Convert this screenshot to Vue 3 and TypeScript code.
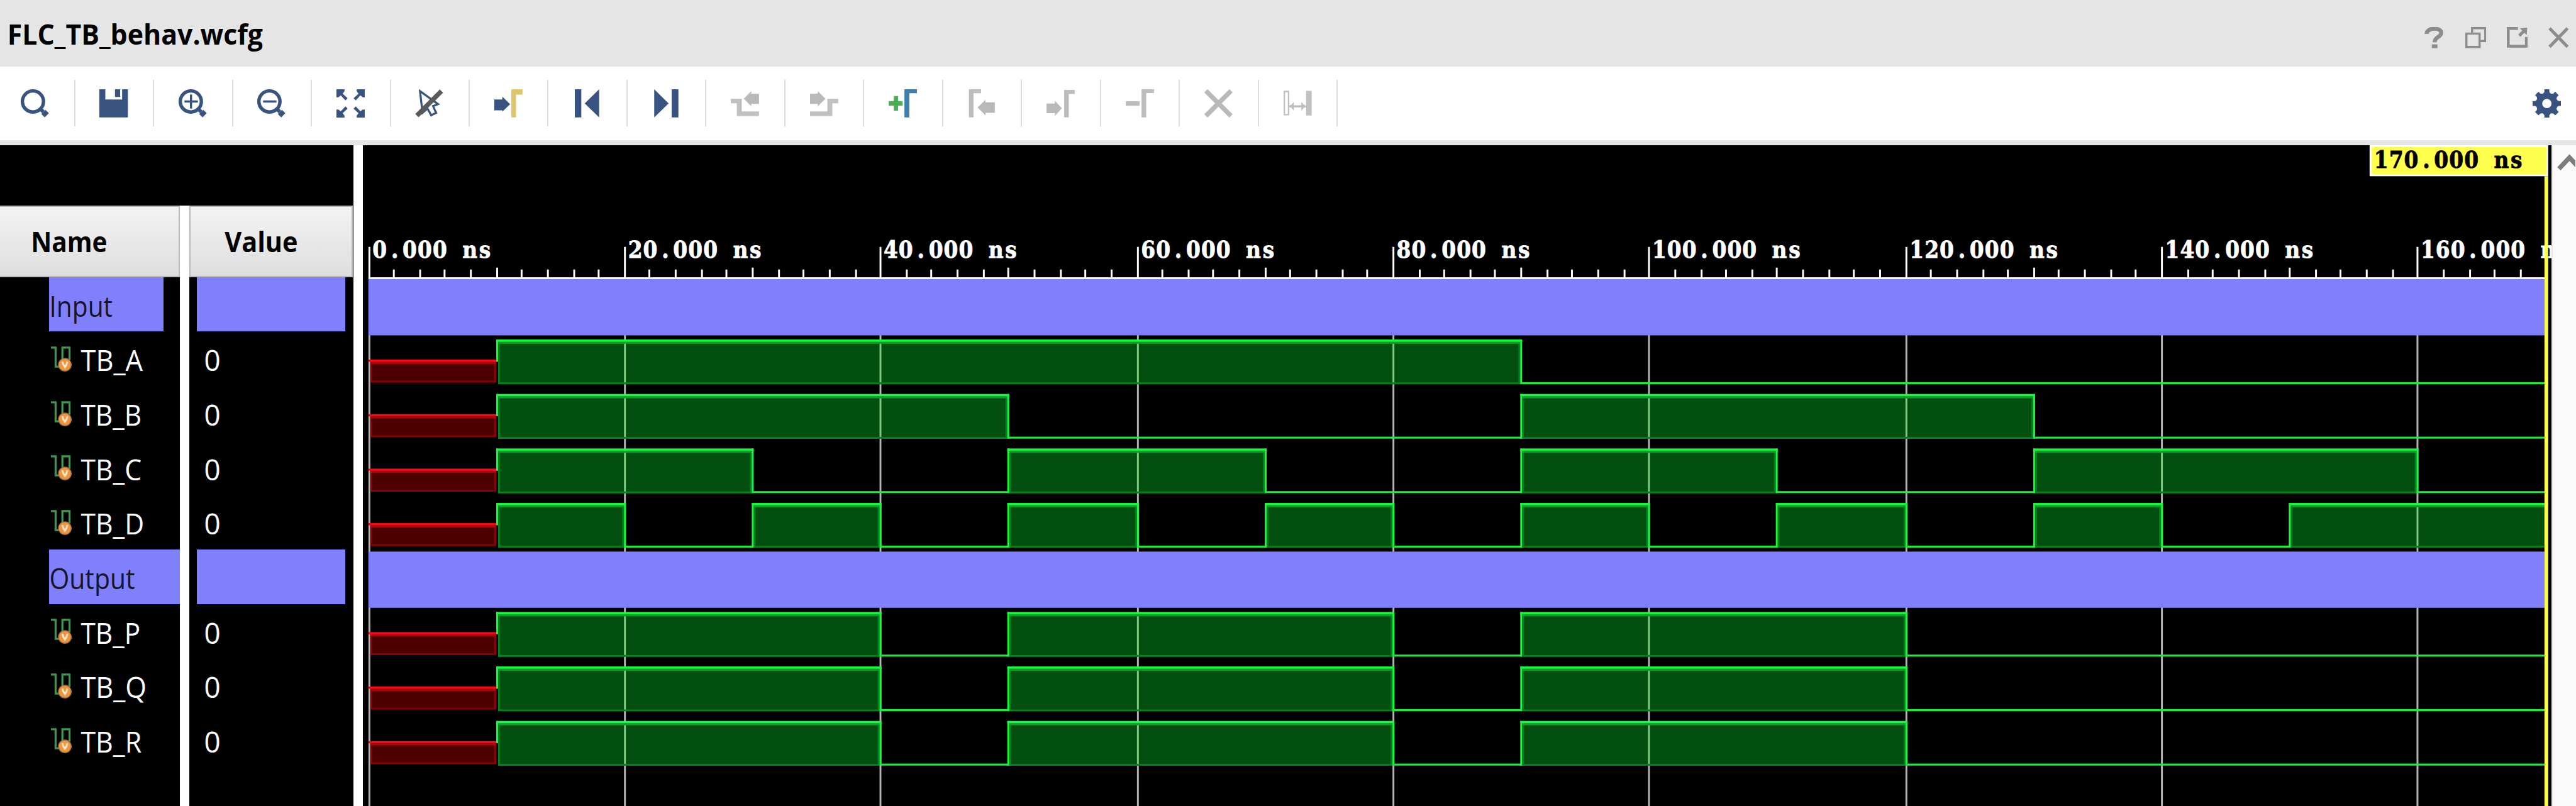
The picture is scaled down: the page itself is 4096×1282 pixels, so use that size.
<script setup lang="ts">
type Level = 'x' | '0' | '1'
interface Segment { from: number; to: number; level: Level }
interface Row { name: string; kind: 'group' | 'signal'; width: number; segments: Segment[] }

const END = 170
const UNIT = 3.03

// Builds the segments of a signal from the intervals in which it is high.
function wave(high: [number, number][]): Segment[] {
  const out: Segment[] = [{ from: 0, to: 10, level: 'x' }]
  let t = 10
  for (const [a, b] of high) {
    if (a > t) out.push({ from: t, to: a, level: '0' })
    out.push({ from: a, to: b, level: '1' })
    t = b
  }
  if (t < END) out.push({ from: t, to: END, level: '0' })
  return out
}

const outputs: [number, number][] = [[10, 40], [50, 80], [90, 120]]
const rows: Row[] = [
  { name: 'Input', kind: 'group', width: 102, segments: [] },
  { name: 'TB_A', kind: 'signal', width: 100, segments: wave([[10, 90]]) },
  { name: 'TB_B', kind: 'signal', width: 98, segments: wave([[10, 50], [90, 130]]) },
  { name: 'TB_C', kind: 'signal', width: 98, segments: wave([[10, 30], [50, 70], [90, 110], [130, 160]]) },
  { name: 'TB_D', kind: 'signal', width: 102, segments: wave([[10, 20], [30, 40], [50, 60], [70, 80], [90, 100], [110, 120], [130, 140], [150, 170]]) },
  { name: 'Output', kind: 'group', width: 138, segments: [] },
  { name: 'TB_P', kind: 'signal', width: 96, segments: wave(outputs) },
  { name: 'TB_Q', kind: 'signal', width: 106, segments: wave(outputs) },
  { name: 'TB_R', kind: 'signal', width: 98, segments: wave(outputs) },
]

// Horizontal position of a time in the wave pane, snapped to whole units.
const px = (ns: number): number => 10.5 + Math.floor(ns * 6.818) * UNIT
const rowTop = (i: number): number => 212.5 + i * 87.9

const minor = Array.from({ length: 85 }, (_, i) => i * 2).filter((t) => t % 20 !== 0)
const major = Array.from({ length: 9 }, (_, i) => i * 20)
const stamp = (ns: number): string => `${ns}.000 ns`
const glyphs = (s: string, x: number): { c: string; x: number }[] =>
  s.split('').map((c, i) => ({ c, x: x + (i + 0.5) * 24.24 })).filter((g) => g.c !== ' ')

const tools = ['find', 'save', 'in', 'out', 'fit', 'cursor', 'goto', 'first', 'last', 'prevT', 'nextT', 'add', 'prevM', 'nextM', 'remove', 'clear', 'swap']
</script>

<template>
  <div class="app">
    <header class="titlebar">
      <svg class="title" width="480" height="107"><text x="12" y="71.500" textLength="412" lengthAdjust="spacingAndGlyphs">FLC_TB_behav.wcfg</text></svg>
      <div class="winbtns">
        <svg width="34" height="34" viewBox="0 0 34 34"><path d="M4.500 11C5 0 29 0 28 10C27.500 17 17.500 15 17.500 24.500" fill="none" stroke="#8c8c8c" stroke-width="6.500" /><rect x="13" y="28" width="9" height="6" fill="#8c8c8c" /></svg>
        <svg width="34" height="34" viewBox="0 0 34 34" fill="none" stroke="#8c8c8c" stroke-width="3.500"><path d="M1.700 10.500H23V32.200H1.700ZM11 10V1.700H32.300V22.500H24" /></svg>
        <svg width="34" height="34" viewBox="0 0 34 34" fill="none" stroke="#8c8c8c" stroke-width="4.500"><path d="M18 2.200H2.300V31H31.500V16" /><path d="M20 14L28 6" stroke-width="5" /><path d="M21 2L33 1L32 13Z" fill="#8c8c8c" stroke="none" /></svg>
        <svg width="34" height="34" viewBox="0 0 34 34"><path d="M2 2L31 32M31 2L2 32" stroke="#8c8c8c" stroke-width="5" /></svg>
      </div>
    </header>

    <nav class="toolbar">
      <div class="tools">
        <div v-for="t in tools" :key="t" class="tool">
          <svg width="46" height="46" viewBox="0 0 46 46">
            <g v-if="t === 'find' || t === 'in' || t === 'out'" stroke="#385380" fill="none">
              <circle cx="19.700" cy="19.700" r="17" stroke-width="5.500" />
              <path d="M33 33L36.500 36.500" stroke-width="6" />
              <path d="M36.500 36.500L42 42" stroke-width="9.500" />
              <path v-if="t !== 'find'" d="M9.500 19.700H31" stroke-width="3.500" />
              <path v-if="t === 'in'" d="M20 8.500V31" stroke-width="3.500" />
            </g>
            <path v-else-if="t === 'save'" fill="#385380" d="M0 0H9.600V16.500H36.700V0H46V45.500H0ZM25.200 0H33.500V12.500H25.200Z" />
            <g v-else-if="t === 'fit'" fill="#385380">
              <path v-for="r in 4" :key="r" :transform="`rotate(${r * 90} 22.8 22.8)`" d="M0 0H13V3L10 7L18 14.500L14.500 18L7 10L3 13H0Z" />
            </g>
            <g v-else-if="t === 'cursor'" fill="none">
              <path d="M8 3L12 38L20 31L26 42L34 38L29 27L37 24Z" stroke="#385380" stroke-width="3.300" />
              <path d="M3 42.500L42.500 3" stroke="#595959" stroke-width="7.500" />
            </g>
            <g v-else-if="t === 'goto'">
              <path fill="#385380" d="M0 16.500H13V12L25.500 24L13 36V34H0Z" />
              <path fill="#dfc66d" d="M27.500 0H45.500V8.500H35V45.500H27.500Z" />
            </g>
            <path v-else-if="t === 'first'" fill="#385380" d="M3 0H13.500V45.500H3ZM42.300 0V45.500L19 22.700Z" />
            <path v-else-if="t === 'last'" fill="#385380" d="M31.500 0H42.300V45.500H31.500ZM3.300 0V45.500L26.500 22.700Z" />
            <g v-else-if="t === 'prevT'">
              <path fill="#b9b9b9" d="M45.500 7H33V3L21 15.300L33 27.500V23.500H45.500Z" />
              <path fill="#c0c0c0" d="M0 15.500H17.700V35.800H45.500V43H9.700V22.500H0Z" />
            </g>
            <g v-else-if="t === 'nextT'">
              <path fill="#b9b9b9" d="M0 7H12.500V3L25 15.300L12.500 27.500V23.500H0Z" />
              <path fill="#c0c0c0" d="M45.500 15.500H28V35.800H0V43H36V22.500H45.500Z" />
            </g>
            <g v-else-if="t === 'add'">
              <path fill="#48b055" d="M8.300 11H15.300V19H22.600V26.500H15.300V34.500H8.300V26.500H0V19H8.300Z" />
              <path fill="#3a7eb0" d="M25.500 0H45.600V6.400H33.300V45.500H25.500Z" />
            </g>
            <g v-else-if="t === 'prevM'" fill="#bdbdbd">
              <path d="M1.700 0H21.300V6.400H9V45.500H1.700Z" />
              <path fill="#b9b9b9" d="M43.500 21H28.500V17L15.500 29.500L28.500 42V38H43.500Z" />
            </g>
            <g v-else-if="t === 'nextM'" fill="#bdbdbd">
              <path d="M28.500 1H45.500V7.500H36V45.500H28.500Z" />
              <path fill="#b9b9b9" d="M0 23H13.500V18.500L24.800 30.700L13.500 43V38.500H0Z" />
            </g>
            <g v-else-if="t === 'remove'" fill="#bdbdbd">
              <path d="M25.500 0H45.700V6.200H33V45.500H25.500Z" />
              <path d="M0 19.200H22.300V26.500H0Z" />
            </g>
            <path v-else-if="t === 'clear'" d="M2.500 2.500L43 43M43 2.500L2.500 43" stroke="#b9b9b9" stroke-width="7.500" />
            <g v-else fill="none" stroke="#c0c0c0">
              <path d="M1.200 3.500H8V41H1.200Z" stroke-width="2.400" />
              <path d="M40.800 2.500V42.300" stroke-width="9" />
              <path d="M9 27.500H36" stroke-width="3.500" />
              <path d="M10 27.500L16.500 20.500V34.500ZM35.500 27.500L28.500 20.500V34.500Z" fill="#c0c0c0" stroke="none" />
            </g>
          </svg>
        </div>
      </div>
      <svg class="gear" width="46" height="46" viewBox="-23 -23 46 46">
        <g fill="#385380"><circle r="12.500" fill="none" stroke="#385380" stroke-width="10" />
          <path v-for="r in 8" :key="r" :transform="`rotate(${r * 45})`" d="M-6.500 -15L-4 -19V-23H4V-19L6.500 -15Z" /></g>
      </svg>
    </nav>

    <main class="body">
      <section class="side">
        <div class="col names">
          <div class="head"><svg width="290" height="115"><text x="50" y="76.500" textLength="123" lengthAdjust="spacingAndGlyphs">Name</text></svg></div>
          <div v-for="r in rows" :key="r.name" class="row" :class="[r.kind, r.name.toLowerCase()]">
            <svg v-if="r.kind === 'signal'" class="sig" width="34" height="42" viewBox="0 0 34 42">
              <path d="M0 2H7.500V32.500H14M18.500 24V2H30V22" fill="none" stroke="#3c9a4e" stroke-width="3.300" />
              <circle cx="22.500" cy="29.500" r="10.300" fill="#f0953a" stroke="#9c6f49" stroke-width="1.500" />
              <path d="M18.500 24.500L20 29.500L22.500 33.500L25 29.500L26.500 24.500" fill="none" stroke="#ffe6cf" stroke-width="3" />
            </svg>
            <svg class="label" width="160" height="88"><text x="0.500" y="63.500" :textLength="r.width" lengthAdjust="spacingAndGlyphs">{{ r.name }}</text></svg>
          </div>
        </div>
        <div class="col values">
          <div class="head"><svg width="260" height="115"><text x="55" y="76.500" textLength="118" lengthAdjust="spacingAndGlyphs">Value</text></svg></div>
          <div v-for="r in rows" :key="r.name" class="row" :class="r.kind">
            <svg v-if="r.kind === 'signal'" class="label" width="60" height="88"><text x="1.500" y="63.500">0</text></svg>
          </div>
        </div>
      </section>

      <section class="waves">
        <svg width="3530" height="1066" viewBox="0 0 3530 1066">
          <rect x="9" y="213" width="3512" height="3" fill="#fff" />
          <rect v-for="t in major" :key="'g' + t" :x="px(t) - 1.5" y="216" width="3" height="850" fill="#b4b4b4" />
          <rect v-for="t in major" :key="'m' + t" :x="px(t) - 1.5" y="164" width="3" height="50" fill="#fff" />
          <rect v-for="t in minor" :key="'n' + t" :x="px(t) - 1.5" :y="t % 10 === 0 ? 197.5 : 200.5" width="3" :height="t % 10 === 0 ? 16 : 13" fill="#fff" />
          <g class="stamp">
            <g v-for="t in major" :key="'t' + t">
              <text v-for="(g, i) in glyphs(stamp(t), px(t) + 4.5)" :key="i" :x="g.x" y="182">{{ g.c }}</text>
            </g>
          </g>
          <g v-for="(r, i) in rows" :key="r.name" :transform="`translate(0 ${rowTop(i)})`">
            <rect v-if="r.kind === 'group'" x="9" y="3.500" width="3509" height="90.700" fill="#8080fa" />
            <template v-for="s in r.segments" :key="s.from">
              <g v-if="s.level === 'x'">
                <rect :x="px(s.from) + 1.5" y="49" :width="px(s.to) - px(s.from) - 3" height="33.500" fill="#4d0000" />
                <path :d="`M${px(s.from) + 3} 49V81H${px(s.to) - 3}V49`" fill="none" stroke="#850007" stroke-width="3" />
                <rect :x="px(s.from) + 1.5" y="49" :width="px(s.to) - px(s.from) - 3" height="3.500" fill="#a8060f" />
                <rect :x="px(s.from) - 1.5" y="45.500" :width="px(s.to) - px(s.from)" height="3.500" fill="#fa0a18" />
              </g>
              <g v-else-if="s.level === '1'">
                <rect :x="px(s.from) + 1.5" y="14" :width="px(s.to) - px(s.from) - 1.5" height="71" fill="#024f10" />
                <template v-for="t in major" :key="t">
                  <rect v-if="t > s.from && t < s.to" :x="px(t) - 1.5" y="15" width="3" height="70" fill="#80c983" />
                </template>
                <path :d="`M${px(s.from) + 3} 15V83.800H${px(s.to) - 3}V15`" fill="none" stroke="#07801f" stroke-width="3" />
                <rect :x="px(s.from) + 1.5" y="16" :width="px(s.to) - px(s.from) - 3" height="4" fill="#0f9c2d" />
                <rect :x="px(s.from) - 1.5" y="13" :width="px(s.to) - px(s.from) + 3" height="3.500" fill="#16fb3c" />
                <rect :x="px(s.from) - 1.5" y="13" width="3" :height="s.from === 10 ? 36 : 72" fill="#16fb3c" />
                <rect v-if="s.to < 170" :x="px(s.to) - 1.5" y="13" width="3" height="72" fill="#16fb3c" />
              </g>
              <g v-else>
                <rect :x="px(s.from) - 1.5" y="81.800" :width="px(s.to) - px(s.from) + 3" height="3.200" fill="#16f03a" />
              </g>
            </template>
          </g>
          <rect x="3518" y="50" width="6" height="1016" fill="#ffff4d" />
          <rect x="3236" y="0" width="288" height="50" fill="#fff" />
          <rect x="3239" y="3" width="282" height="44" fill="#ffff4d" />
          <g class="stamp dark">
            <text v-for="(g, i) in glyphs('170.000 ns', 3242.5)" :key="i" :x="g.x" y="37">{{ g.c }}</text>
          </g>
        </svg>
      </section>
      <aside class="scroll">
        <svg width="36" height="50" viewBox="0 0 36 50"><path d="M10 38L27 20L44 38" fill="none" stroke="#7d7d7d" stroke-width="7.500" /></svg>
      </aside>
    </main>
  </div>
</template>

<style>
body { margin: 0; overflow: hidden; background: #000; }
</style>

<style scoped>
.app {
  zoom: 0.98604;
  width: 4154px;
  height: 1301px;
  overflow: hidden;
  display: flex;
  flex-direction: column;
  background: #e5e5e5;
  font-family: "Open Sans", "Noto Sans", sans-serif;
}
svg { display: block; flex: none; }
.titlebar { height: 107px; flex: none; display: flex; justify-content: space-between; background: #e5e5e5; }
.title text { font-size: 46px; font-weight: 700; fill: #000; }
.winbtns { display: flex; gap: 33px; padding: 44px 11px 0 0; }
.toolbar { height: 119px; flex: none; display: flex; justify-content: space-between; background: #fff; }
.tools { display: flex; padding-top: 22px; margin-left: -6px; }
.tool { box-sizing: border-box; width: 127.27px; height: 75px; padding: 15px 0 0 39.3px; border-right: 3px solid #dcdcdc; }
.gear { margin: 37px 24px 0 0; }
.body { margin-top: 8px; height: 1067px; flex: none; display: flex; background: #000; }
.side { width: 569.5px; flex: none; display: flex; padding-top: 98px; box-sizing: border-box; }
.col { display: flex; flex-direction: column; flex: none; }
.names { width: 290.5px; border-right: 16px solid #fff; overflow: hidden; }
.values { width: 263px; }
.head { height: 115px; flex: none; box-sizing: border-box; border: 3px solid #b9b9b9; border-left-width: 0; background: linear-gradient(#f3f3f3, #dedee0); }
.values .head { border-left-width: 3px; }
.head svg { margin-top: -3px; }
.head text { font-size: 46px; font-weight: 700; fill: #000; }
.row { height: 87.9px; flex: none; display: flex; box-sizing: border-box; }
.names .signal { padding-left: 82px; }
.sig { margin: 24px 14px 0 0; }
.signal .label { fill: #fff; }
.label text { font-size: 46.5px; }
.names .group { margin-left: 79px; background: #8080fa; fill: #15152e; }
.names .input { width: 185px; }
.values .group { margin: 0 12px; background: #8080fa; }
.values .signal { padding-left: 22px; }
.waves { width: 3530px; border-left: 15.5px solid #fff; flex: none; overflow: hidden; }
.stamp text { font: 700 37px "DejaVu Serif Condensed", "DejaVu Serif", serif; font-stretch: condensed; text-anchor: middle; fill: #fff; stroke: #fff; stroke-width: 0.8px; }
.stamp.dark text { fill: #000; stroke: #000; }
.scroll { flex: 1; background: #fafafa; border-left: 3px solid #e6e6e6; overflow: hidden; }
</style>
